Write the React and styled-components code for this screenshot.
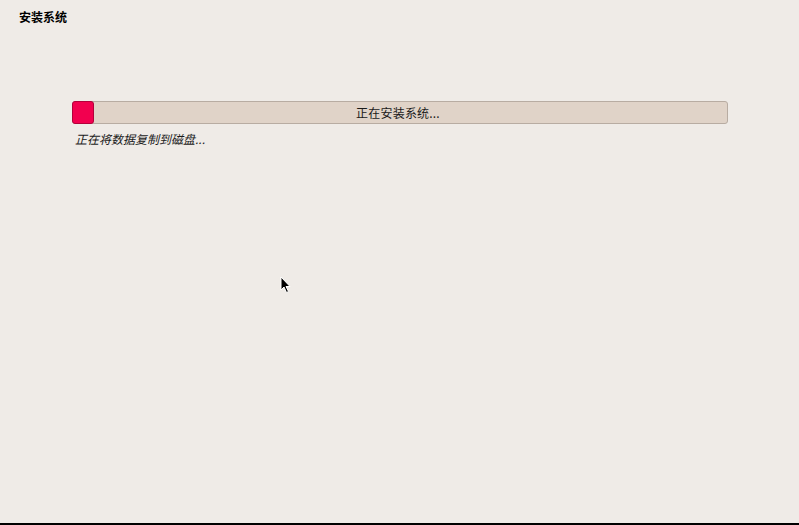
import React from 'react';
import styled, { createGlobalStyle } from 'styled-components';

const Global = createGlobalStyle`
  html, body { margin: 0; padding: 0; }
  body {
    background: #efebe7;
    font-family: "Noto Sans CJK SC", "DejaVu Sans", sans-serif;
    color: #000;
  }
`;

const Screen = styled.div`
  position: relative;
  width: 799px;
  height: 525px;
  box-sizing: border-box;
  background: #efebe7;
  border-bottom: 2px solid #000;
  display: flex;
  flex-direction: column;
`;

const Title = styled.h1`
  margin: 0;
  padding: 8px 0 0 19px;
  font-size: 12px;
  line-height: 18px;
  font-weight: 700;
`;

const Content = styled.div`
  padding: 75px 71px 0 72px;
  display: flex;
  flex-direction: column;
  gap: 7px;
`;

const Bar = styled.div`
  position: relative;
  height: 23px;
  box-sizing: border-box;
  border: 1px solid #b8aca2;
  border-radius: 3px;
  background: #e0d3c8;
  display: flex;
  align-items: center;
  justify-content: center;
`;

const Fill = styled.div`
  position: absolute;
  left: -1px;
  top: -1px;
  bottom: -1px;
  border-radius: 3px;
  background: #f2004f;
  border: 1px solid #b3003b;
  box-sizing: border-box;
`;

const BarLabel = styled.span`
  position: relative;
  font-size: 12px;
  line-height: 16px;
  color: #1a1a1a;
  letter-spacing: 0.2px;
  margin-left: -4px;
`;

const Status = styled.div`
  padding-left: 3px;
  font-size: 12px;
  line-height: 16px;
  font-style: italic;
  color: #1a1a1a;
`;

const Cursor = styled.svg`
  position: absolute;
  left: 280px;
  top: 276px;
`;

export default function App() {
  const progress = 22;
  return (
    <>
      <Global />
      <Screen>
        <Title>安装系统</Title>
        <Content>
          <Bar>
            <Fill style={{ width: progress + 'px' }} />
            <BarLabel>正在安装系统...</BarLabel>
          </Bar>
          <Status>正在将数据复制到磁盘...</Status>
        </Content>
        <Cursor width="12" height="18" viewBox="0 0 12 18">
          <path d="M1 1 L1 14 L4 11 L6.5 16.5 L8.5 15.5 L6 10.5 L10 10.5 Z" fill="#000" stroke="#fff" strokeWidth="1" />
        </Cursor>
      </Screen>
    </>
  );
}
